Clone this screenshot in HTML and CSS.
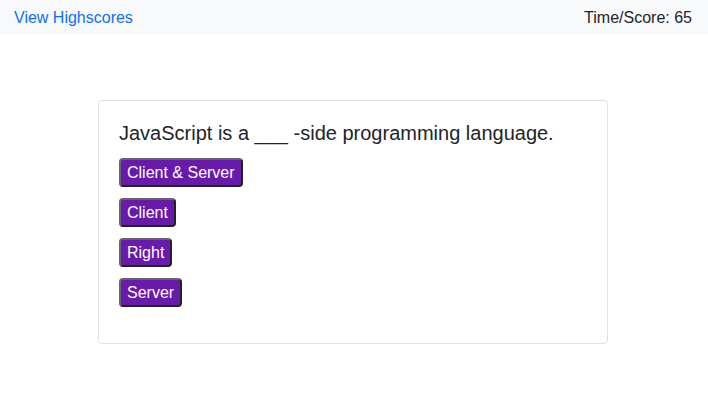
FILE: index.html
```html
<!DOCTYPE html>
<html>
<head>
<meta charset="utf-8">
<link rel="stylesheet" href="styles.css">
</head>
<body>
<header class="topbar">
  <a class="hs-link" href="#">View Highscores</a>
  <span class="score">Time/Score: 65</span>
</header>
<main class="quiz-card">
  <h2 class="question">JavaScript is a ___ -side programming language.</h2>
  <div class="answers">
    <button class="answer">Client &amp; Server</button>
    <button class="answer">Client</button>
    <button class="answer">Right</button>
    <button class="answer">Server</button>
  </div>
</main>
</body>
</html>
```
FILE: styles.css
```css
html, body {
  margin: 0;
  padding: 0;
  background: #fff;
  font-family: "Liberation Sans", Arial, sans-serif;
  color: #212529;
}
.topbar {
  display: flex;
  justify-content: space-between;
  align-items: center;
  height: 35px;
  padding: 0 16px 0 14px;
  background: #f8f9fa;
  font-size: 16px;
}
.hs-link {
  color: #0d6efd;
  text-decoration: none;
}
.score {
  color: #212529;
}
.quiz-card {
  width: 468px;
  margin: 65px 0 0 98px;
  padding: 20px 20px 36px 20px;
  border: 1px solid #dee2e6;
  border-radius: 4px;
}
.question {
  margin: 0 0 13px 0;
  font-size: 20px;
  font-weight: 500;
  line-height: 24px;
}
.answers {
  display: flex;
  flex-direction: column;
  align-items: flex-start;
  gap: 11px;
}
.answer {
  box-sizing: border-box;
  height: 29px;
  font-family: "Liberation Sans", Arial, sans-serif;
  font-size: 16px;
  line-height: 21px;
  color: #fff;
  background: #681aaa;
  border: 2px solid;
  border-color: #666 #222 #222 #666;
  border-radius: 4px;
  padding: 2px 6px;
}
```
